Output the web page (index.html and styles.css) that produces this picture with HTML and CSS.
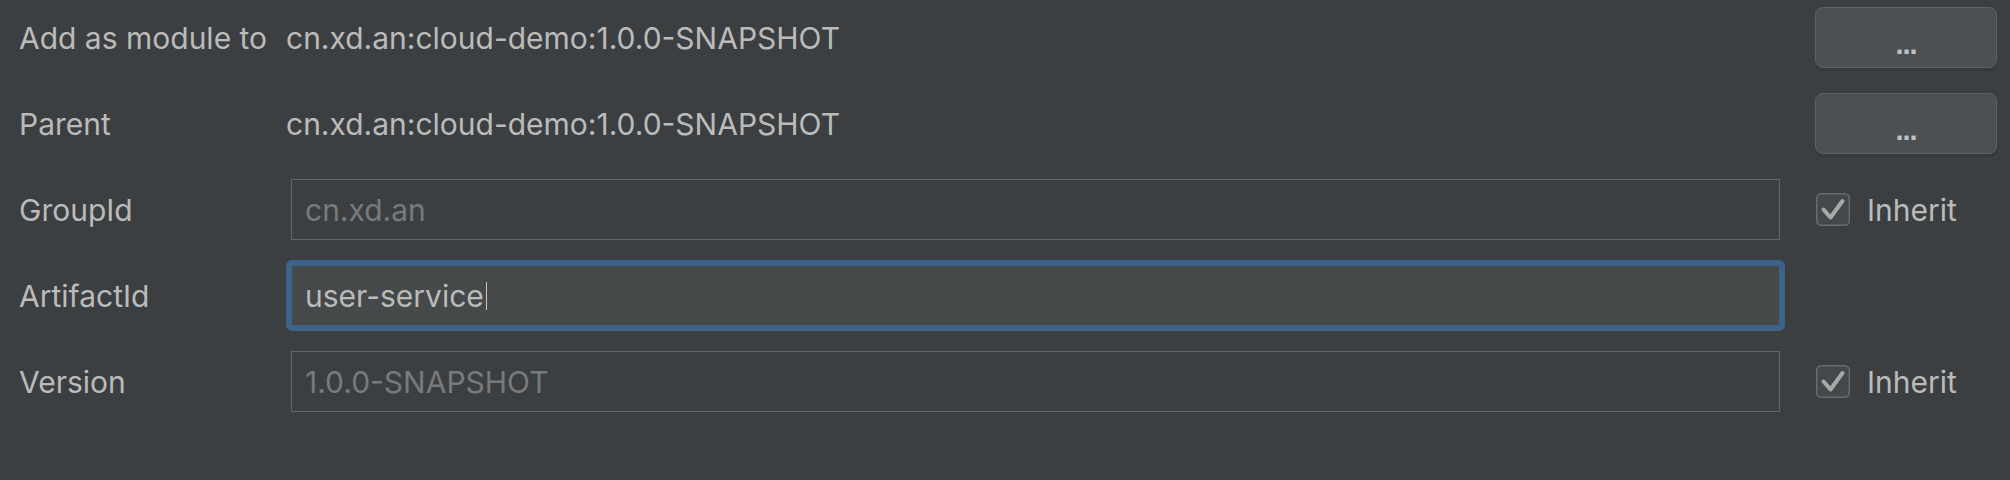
FILE: index.html
```html
<!DOCTYPE html>
<html>
<head>
<meta charset="utf-8">
<link rel="stylesheet" href="styles.css">
</head>
<body>
<div class="form">
  <div class="label">Add as module to</div>
  <div class="value">cn.xd.an:cloud-demo:1.0.0-SNAPSHOT</div>
  <button class="browse">...</button>

  <div class="label">Parent</div>
  <div class="value">cn.xd.an:cloud-demo:1.0.0-SNAPSHOT</div>
  <button class="browse">...</button>

  <div class="label">GroupId</div>
  <div class="field disabled">cn.xd.an</div>
  <div class="check">
    <svg class="box" width="34" height="33" viewBox="0 0 34 33"><rect x="0.75" y="0.75" width="32.5" height="31.5" rx="4.5" fill="#43494a" stroke="#6b6b6b" stroke-width="1.5"/><path d="M7.5 16.5 L14.5 24.5 L26.5 8" fill="none" stroke="#a8a8a8" stroke-width="4" stroke-linecap="round" stroke-linejoin="round"/></svg>
    <span>Inherit</span>
  </div>

  <div class="label">ArtifactId</div>
  <div class="field focused"><span>user-service</span><span class="caret"></span></div>
  <div class="empty"></div>

  <div class="label">Version</div>
  <div class="field disabled">1.0.0-SNAPSHOT</div>
  <div class="check">
    <svg class="box" width="34" height="33" viewBox="0 0 34 33"><rect x="0.75" y="0.75" width="32.5" height="31.5" rx="4.5" fill="#43494a" stroke="#6b6b6b" stroke-width="1.5"/><path d="M7.5 16.5 L14.5 24.5 L26.5 8" fill="none" stroke="#a8a8a8" stroke-width="4" stroke-linecap="round" stroke-linejoin="round"/></svg>
    <span>Inherit</span>
  </div>
</div>
</body>
</html>
```
FILE: styles.css
```css
html, body {
  margin: 0;
  padding: 0;
  background: #3c3f41;
  width: 2010px;
  height: 480px;
  overflow: hidden;
}
body {
  font-family: Inter, "Liberation Sans", Arial, sans-serif;
  font-size: 30px;
  color: #bbbbbb;
}
.form {
  display: grid;
  grid-template-columns: 237px 1499px 182px;
  grid-auto-rows: 61px;
  column-gap: 30px;
  row-gap: 25px;
  padding: 7px 13px 0 19px;
  align-items: center;
}
.label, .value {
  white-space: nowrap;
}
.browse {
  height: 61px;
  width: 182px;
  margin: 0;
  padding: 0 0 6px 0;
  background: #4c5052;
  border: 1px solid #5f6263;
  border-radius: 8px;
  box-shadow: 0 3px 0 #37393b;
  color: #bbc2c8;
  font-family: "Liberation Sans", Arial, sans-serif;
  font-size: 29px;
  font-weight: bold;
  letter-spacing: -1px;
  display: flex;
  align-items: flex-end;
  justify-content: center;
}
.field {
  box-sizing: border-box;
  height: 61px;
  display: flex;
  align-items: center;
  padding-left: 13px;
  white-space: nowrap;
}
.field.disabled {
  margin: 0 5px;
  border: 1px solid #646464;
  color: #787a7c;
}
.field.focused {
  height: 71px;
  border: 6px solid #3e6389;
  border-radius: 6px;
  background: #45494a;
  color: #bbbbbb;
}
.caret {
  display: inline-block;
  width: 1px;
  height: 28px;
  background: #c8c8c8;
  margin-left: 2px;
}
.check {
  display: flex;
  align-items: center;
  gap: 17px;
  padding-left: 1px;
  color: #bbbbbb;
}
.check .box {
  display: block;
  flex: none;
}
```
